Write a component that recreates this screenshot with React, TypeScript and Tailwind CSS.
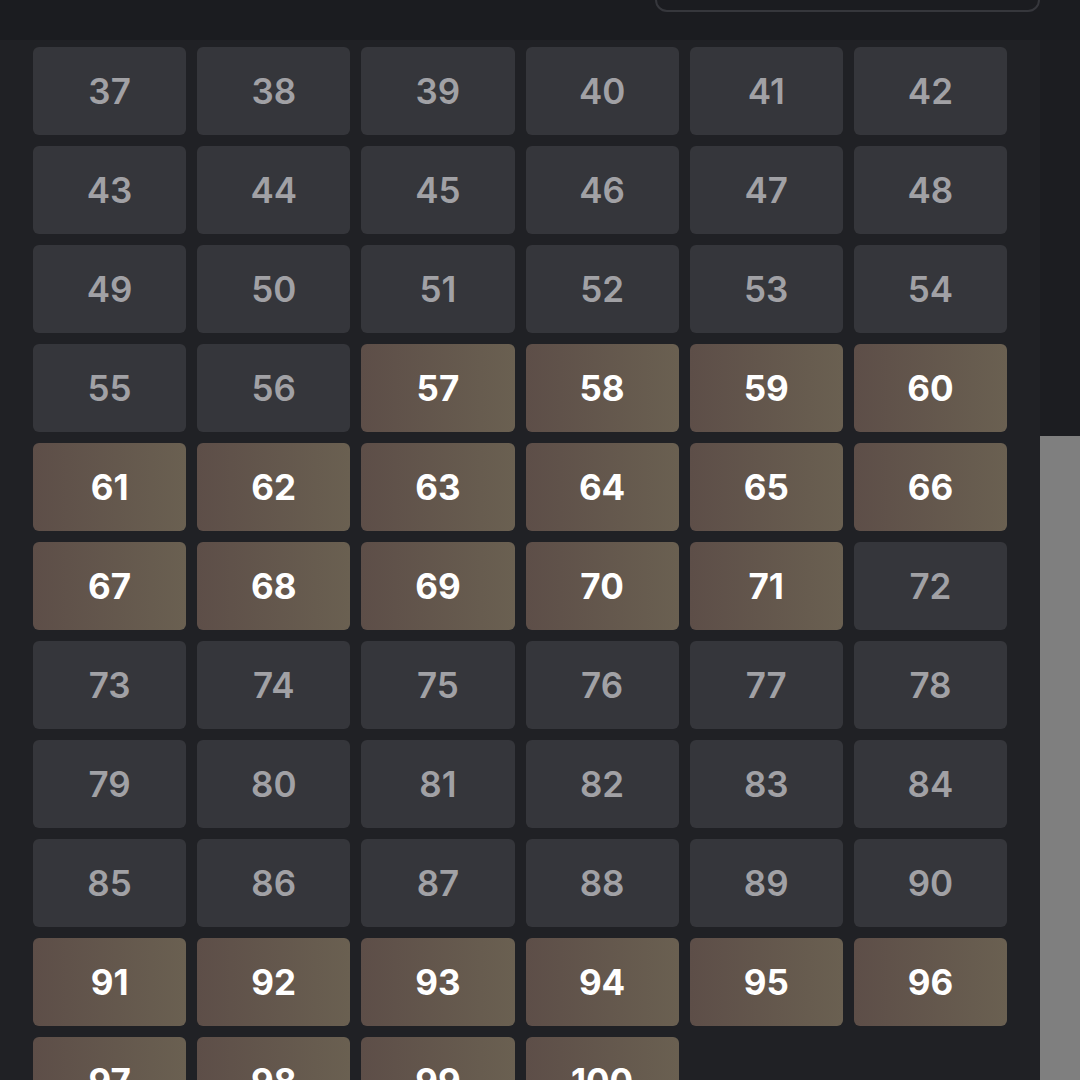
import React from 'react';

const highlighted = new Set<number>([
  57, 58, 59, 60, 61, 62, 63, 64, 65, 66, 67, 68, 69, 70, 71,
  91, 92, 93, 94, 95, 96, 97, 98, 99, 100,
]);

const numbers = Array.from({ length: 64 }, (_, i) => i + 37);

const Tile: React.FC<{ n: number }> = ({ n }) => {
  const on = highlighted.has(n);
  return (
    <div
      className={`h-[88px] rounded-md flex items-center justify-center text-[35px] ${
        on
          ? 'bg-gradient-to-r from-[#5d4e48] to-[#6a6051] text-white font-bold'
          : 'bg-[#35363b] text-[#a1a1a5] font-semibold'
      }`}
    >
      {n}
    </div>
  );
};

const App: React.FC = () => {
  return (
    <div
      className="w-[1080px] h-[1080px] overflow-hidden flex flex-col bg-[#1b1c20]"
      style={{ fontFamily: 'Inter, "Noto Sans", sans-serif' }}
    >
      {/* Header */}
      <div className="h-[40px] shrink-0 flex justify-end pr-[40px] bg-[#1b1c20]">
        <div className="w-[385px] h-[30px] -mt-[18px] rounded-xl border-2 border-[#36373c]" />
      </div>

      {/* Body */}
      <div className="flex flex-1 min-h-0">
        <div className="flex-1 bg-[#202125] px-[33px] pt-[7px] overflow-hidden">
          <div className="grid grid-cols-6 gap-[11px]">
            {numbers.map((n) => (
              <Tile key={n} n={n} />
            ))}
          </div>
        </div>

        {/* Scrollbar */}
        <div className="w-[40px] shrink-0 flex flex-col bg-[#1c1d21]">
          <div className="h-[396px]" />
          <div className="flex-1 bg-[#7f7f7f]" />
        </div>
      </div>
    </div>
  );
};

export default App;
